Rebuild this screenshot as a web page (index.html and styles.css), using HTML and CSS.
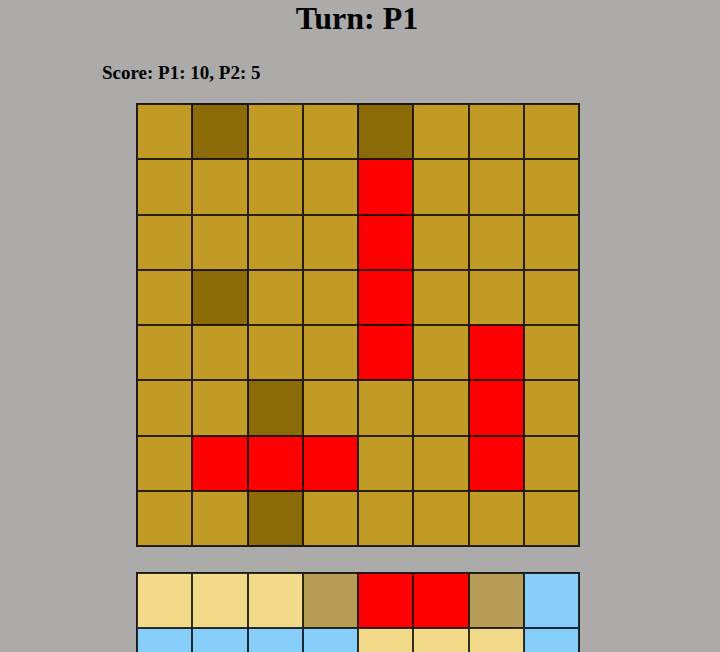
FILE: index.html
```html
<!DOCTYPE html>
<html>
<head>
<meta charset="utf-8">
<link rel="stylesheet" href="styles.css">
</head>
<body>
<h1 class="turn">Turn: P1</h1>
<p class="score">Score: P1: 10, P2: 5</p>
<div class="board">
  <div class="cell g"></div><div class="cell d"></div><div class="cell g"></div><div class="cell g"></div><div class="cell d"></div><div class="cell g"></div><div class="cell g"></div><div class="cell g"></div>
  <div class="cell g"></div><div class="cell g"></div><div class="cell g"></div><div class="cell g"></div><div class="cell r"></div><div class="cell g"></div><div class="cell g"></div><div class="cell g"></div>
  <div class="cell g"></div><div class="cell g"></div><div class="cell g"></div><div class="cell g"></div><div class="cell r"></div><div class="cell g"></div><div class="cell g"></div><div class="cell g"></div>
  <div class="cell g"></div><div class="cell d"></div><div class="cell g"></div><div class="cell g"></div><div class="cell r"></div><div class="cell g"></div><div class="cell g"></div><div class="cell g"></div>
  <div class="cell g"></div><div class="cell g"></div><div class="cell g"></div><div class="cell g"></div><div class="cell r"></div><div class="cell g"></div><div class="cell r"></div><div class="cell g"></div>
  <div class="cell g"></div><div class="cell g"></div><div class="cell d"></div><div class="cell g"></div><div class="cell g"></div><div class="cell g"></div><div class="cell r"></div><div class="cell g"></div>
  <div class="cell g"></div><div class="cell r"></div><div class="cell r"></div><div class="cell r"></div><div class="cell g"></div><div class="cell g"></div><div class="cell r"></div><div class="cell g"></div>
  <div class="cell g"></div><div class="cell g"></div><div class="cell d"></div><div class="cell g"></div><div class="cell g"></div><div class="cell g"></div><div class="cell g"></div><div class="cell g"></div>
</div>
<div class="board board-own">
  <div class="cell p"></div><div class="cell p"></div><div class="cell p"></div><div class="cell t"></div><div class="cell r"></div><div class="cell r"></div><div class="cell t"></div><div class="cell b"></div>
  <div class="cell b"></div><div class="cell b"></div><div class="cell b"></div><div class="cell b"></div><div class="cell p"></div><div class="cell p"></div><div class="cell p"></div><div class="cell b"></div>
  <div class="cell b"></div><div class="cell b"></div><div class="cell b"></div><div class="cell b"></div><div class="cell b"></div><div class="cell b"></div><div class="cell b"></div><div class="cell b"></div>
  <div class="cell b"></div><div class="cell b"></div><div class="cell b"></div><div class="cell b"></div><div class="cell b"></div><div class="cell b"></div><div class="cell b"></div><div class="cell b"></div>
</div>
</body>
</html>
```

FILE: styles.css
```css
html, body {
  margin: 0;
  padding: 0;
  background: #adaba9;
  font-family: "Liberation Serif", "Times New Roman", serif;
  color: #000;
}

.turn {
  margin: 0;
  padding-right: 6px;
  font-size: 32px;
  line-height: 37px;
  font-weight: bold;
  text-align: center;
}

.score {
  margin: 25px 0 0 102px;
  font-size: 19px;
  line-height: 22px;
  font-weight: bold;
}

.board {
  margin: 19px 0 0 136px;
  width: 444px;
  box-sizing: border-box;
  border: 1px solid rgba(0, 0, 0, 0.85);
  display: grid;
  grid-template-columns: repeat(8, 55.25px);
  grid-auto-rows: 55.25px;
}

.board-own {
  margin-top: 25px;
}

.cell {
  box-sizing: border-box;
  border: 1px solid rgba(0, 0, 0, 0.8);
}

.g { background: #c29a26; }
.d { background: #8b6a08; }
.r { background: #ff0000; }
.p { background: #f3d98a; }
.t { background: #b89d57; }
.b { background: #87cefa; }
```
